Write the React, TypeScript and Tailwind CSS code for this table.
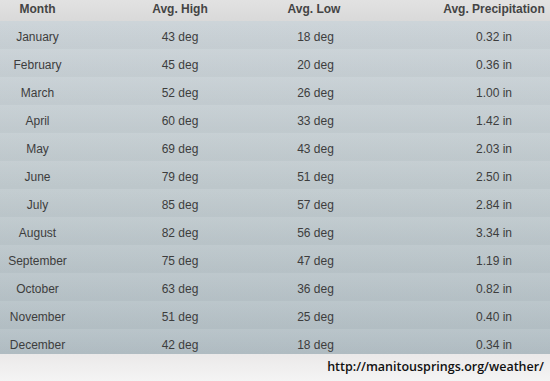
import React from "react";

const rows: [string, string, string, string][] = [
  ["January", "43 deg", "18 deg", "0.32 in"],
  ["February", "45 deg", "20 deg", "0.36 in"],
  ["March", "52 deg", "26 deg", "1.00 in"],
  ["April", "60 deg", "33 deg", "1.42 in"],
  ["May", "69 deg", "43 deg", "2.03 in"],
  ["June", "79 deg", "51 deg", "2.50 in"],
  ["July", "85 deg", "57 deg", "2.84 in"],
  ["August", "82 deg", "56 deg", "3.34 in"],
  ["September", "75 deg", "47 deg", "1.19 in"],
  ["October", "63 deg", "36 deg", "0.82 in"],
  ["November", "51 deg", "25 deg", "0.40 in"],
  ["December", "42 deg", "18 deg", "0.34 in"],
];

export default function App() {
  return (
    <div
      className="w-[550px] h-[381px] overflow-hidden flex flex-col bg-[#efefef]"
      style={{ fontFamily: '"Liberation Sans", Arial, sans-serif' }}
    >
      <div className="h-[21px] shrink-0 flex items-start pt-[2px] bg-gradient-to-b from-[#e2e2e2] to-[#d9d9d9] text-[12px] leading-[14px] font-bold text-[#444]">
        <div className="w-[75px] flex justify-center whitespace-nowrap">Month</div>
        <div className="w-[210px] flex justify-center whitespace-nowrap">Avg. High</div>
        <div className="w-[58px] flex justify-center whitespace-nowrap">Avg. Low</div>
        <div className="flex-1 pl-[95px] flex justify-center whitespace-nowrap">Avg. Precipitation</div>
      </div>
      <div className="flex flex-col bg-gradient-to-b from-[#cad2d7] via-[#c0cace] to-[#b3bfc5] text-[12px] leading-[14px] text-[#3d3d3d]">
        {rows.map((r, i) => (
          <div
            key={r[0]}
            className={
              "flex items-start pt-[9px] bg-gradient-to-b from-[#ffffff10] to-[#00000004] " +
              (i === rows.length - 1 ? "h-[25px]" : "h-[28px]")
            }
          >
            <div className="w-[75px] flex justify-center whitespace-nowrap">{r[0]}</div>
            <div className="w-[210px] flex justify-center whitespace-nowrap">{r[1]}</div>
            <div className="w-[58px] flex justify-center whitespace-nowrap pl-[3px]">{r[2]}</div>
            <div className="flex-1 pl-[95px] flex justify-center whitespace-nowrap">{r[3]}</div>
          </div>
        ))}
      </div>
      <div className="flex-1 flex items-start justify-end pr-[6px] pt-[5px] bg-gradient-to-b from-[#ebe9e9] to-[#f4f4f4]">
        <span
          className="text-[12.5px] leading-[16px] font-semibold text-[#111]"
          style={{ fontFamily: '"Open Sans", "DejaVu Sans", sans-serif' }}
        >
          http://manitousprings.org/weather/
        </span>
      </div>
    </div>
  );
}
